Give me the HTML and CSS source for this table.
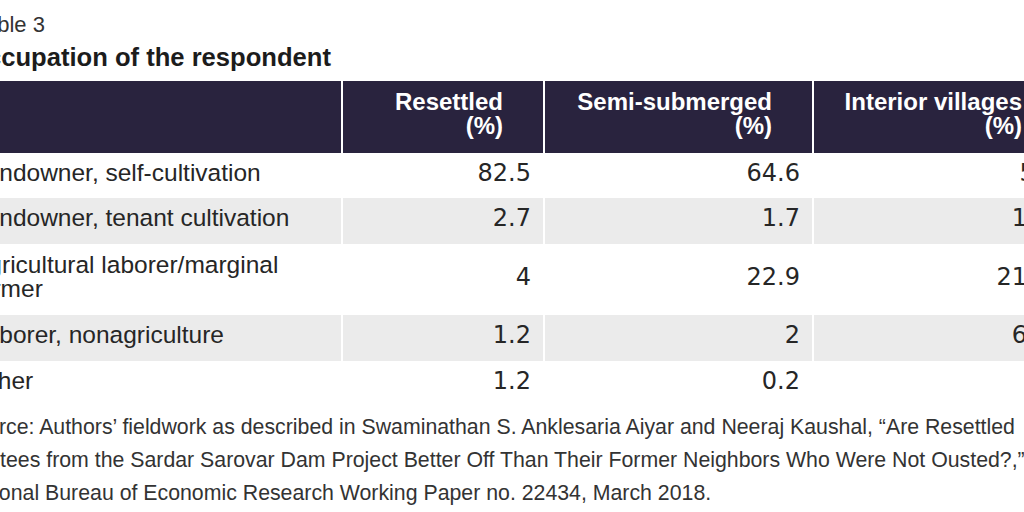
FILE: index.html
```html
<!DOCTYPE html>
<html lang="en">
<head>
<meta charset="utf-8">
<title>Table 3</title>
<link rel="stylesheet" href="styles.css">
</head>
<body>
<div class="page">
  <div class="kicker">Table 3</div>
  <h1 class="title">Occupation of the respondent</h1>
  <table class="data">
    <colgroup>
      <col class="c-label">
      <col class="c-res">
      <col class="c-semi">
      <col class="c-int">
    </colgroup>
    <thead>
      <tr class="head">
        <th></th>
        <th><span class="hl">Resettled</span><span class="hl">(%)</span></th>
        <th><span class="hl">Semi-submerged</span><span class="hl">(%)</span></th>
        <th><span class="hl">Interior villages</span><span class="hl">(%)</span></th>
      </tr>
    </thead>
    <tbody>
      <tr class="r45">
        <td class="label">Landowner, self-cultivation</td>
        <td class="num">82.5</td>
        <td class="num">64.6</td>
        <td class="num">56</td>
      </tr>
      <tr class="r46 shade">
        <td class="label">Landowner, tenant cultivation</td>
        <td class="num">2.7</td>
        <td class="num">1.7</td>
        <td class="num">1.8</td>
      </tr>
      <tr class="r71">
        <td class="label"><span class="ll">Agricultural laborer/marginal</span><span class="ll">farmer</span></td>
        <td class="num">4</td>
        <td class="num">22.9</td>
        <td class="num">21.4</td>
      </tr>
      <tr class="r46 shade">
        <td class="label">Laborer, nonagriculture</td>
        <td class="num">1.2</td>
        <td class="num">2</td>
        <td class="num">6.2</td>
      </tr>
      <tr class="r45">
        <td class="label">Other</td>
        <td class="num">1.2</td>
        <td class="num">0.2</td>
        <td class="num">1</td>
      </tr>
    </tbody>
  </table>
  <p class="source">
    <span class="line">Source: Authors’ fieldwork as described in Swaminathan S. Anklesaria Aiyar and Neeraj Kaushal, “Are Resettled</span>
    <span class="line">Oustees from the Sardar Sarovar Dam Project Better Off Than Their Former Neighbors Who Were Not Ousted?,”</span>
    <span class="line">National Bureau of Economic Research Working Paper no. 22434, March 2018.</span>
  </p>
</div>
</body>
</html>
```

FILE: styles.css
```css
html, body {
  margin: 0;
  padding: 0;
  overflow: hidden;
  background: #ffffff;
}

body {
  font-family: "Liberation Sans", Arial, sans-serif;
  color: #262626;
}

.page {
  margin-left: -39px;
  width: 1140px;
}

.kicker {
  padding-top: 12px;
  padding-left: 13px;
  font-size: 22px;
  line-height: 25px;
  color: #333333;
}

.title {
  margin: 6px 0 0;
  padding-left: 6px;
  font-size: 25.6px;
  line-height: 29px;
  font-weight: bold;
  color: #1c1c1c;
}

.data {
  margin-top: 9px;
  border-collapse: separate;
  border-spacing: 2px 0;
  table-layout: fixed;
  width: 1102px;
}

.c-label { width: 378px; }
.c-res { width: 200px; }
.c-semi { width: 267px; }
.c-int { width: 248px; }

.data th,
.data td {
  padding: 0 0 6px;
  vertical-align: middle;
  font-size: 24px;
  line-height: 24px;
}

.head { height: 72px; }

.head th {
  background: #29233e;
  color: #ffffff;
  font-weight: bold;
  text-align: right;
  padding-right: 40px;
}

.hl,
.ll {
  display: block;
}

.r45 { height: 45px; }
.r46 { height: 46px; }
.r71 { height: 71px; }

.shade td { background: #ebebeb; }

.data td.label {
  padding-left: 9px;
  font-size: 24.5px;
  text-align: left;
  color: #262626;
}

.data td.num {
  font-family: "DejaVu Sans", "Liberation Sans", sans-serif;
  text-align: right;
  padding-right: 12px;
  color: #262626;
}

.source {
  margin: 5px 0 0;
  font-size: 21.3px;
  line-height: 33px;
  color: #333333;
}

.source .line {
  display: block;
  white-space: nowrap;
}
```
